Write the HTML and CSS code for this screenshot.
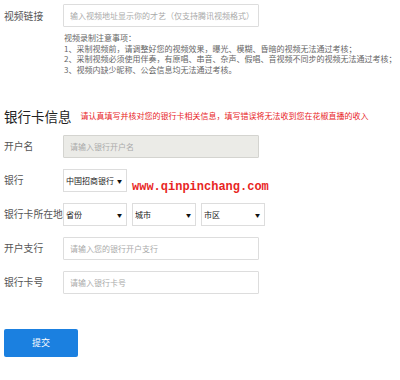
FILE: index.html
```html
<!DOCTYPE html>
<html lang="zh-CN">
<head>
    <meta charset="UTF-8">
    <title>银行卡信息</title>
    <link rel="stylesheet" href="styles.css">
</head>
<body>
    <div class="page">
        <!-- Video link -->
        <div class="form-row">
            <label class="form-label">视频链接</label>
            <input class="form-input" type="text" placeholder="输入视频地址显示你的才艺（仅支持腾讯视频格式）">
        </div>
        <div class="notes">
            <div>视频录制注意事项：</div>
            <div>1、采制视频前，请调整好您的视频效果，曝光、模糊、昏暗的视频无法通过考核；</div>
            <div>2、采制视频必须使用伴奏，有原唱、串音、杂声、假唱、音视频不同步的视频无法通过考核；</div>
            <div>3、视频内缺少昵称、公会信息均无法通过考核。</div>
        </div>

        <!-- Bank card -->
        <div class="section-head">
            <h2 class="section-title">银行卡信息</h2>
            <span class="section-tip">请认真填写并核对您的银行卡相关信息，填写错误将无法收到您在花椒直播的收入</span>
        </div>

        <div class="form-row">
            <label class="form-label">开户名</label>
            <input class="form-input disabled" type="text" placeholder="请输入银行开户名" disabled>
        </div>
        <div class="form-row">
            <label class="form-label">银行</label>
            <div class="select"><span>中国招商银行</span><span class="arrow">▼</span></div>
            <span class="watermark">www.qinpinchang.com</span>
        </div>
        <div class="form-row">
            <label class="form-label">银行卡所在地</label>
            <div class="select-group">
                <div class="select"><span>省份</span><span class="arrow">▼</span></div>
                <div class="select"><span>城市</span><span class="arrow">▼</span></div>
                <div class="select"><span>市区</span><span class="arrow">▼</span></div>
            </div>
        </div>
        <div class="form-row">
            <label class="form-label">开户支行</label>
            <input class="form-input" type="text" placeholder="请输入您的银行开户支行">
        </div>
        <div class="form-row">
            <label class="form-label">银行卡号</label>
            <input class="form-input" type="text" placeholder="请输入银行卡号">
        </div>

        <button class="submit-btn">提交</button>
    </div>
</body>
</html>
```

FILE: styles.css
```css
body {
    margin: 0;
    padding: 0;
    background: #fff;
    color: #555;
    font-family: "Noto Sans CJK SC", "Noto Sans", sans-serif;
}

.page {
    padding: 4px 0 0 4px;
}

/* Rows */
.form-row {
    display: flex;
    align-items: center;
    height: 23px;
    margin-bottom: 11px;
}

.form-label {
    width: 59px;
    flex-shrink: 0;
    font-size: 9.8px;
    color: #555;
    white-space: nowrap;
}

.form-input {
    box-sizing: border-box;
    width: 196px;
    height: 23px;
    margin: 0;
    padding: 0 6px;
    border: 1px solid #ddd;
    border-radius: 1px;
    font-family: inherit;
    font-size: 8px;
    outline: none;
}

.form-input::placeholder {
    color: #aaa;
}

.form-input.disabled {
    background: #ebebe7;
    border-color: #d4d4d0;
}

/* Notes under video link */
.notes {
    margin-top: -5px;
    padding-left: 60px;
    font-size: 8px;
    line-height: 10.7px;
    color: #666;
}

/* Section heading */
.section-head {
    display: flex;
    align-items: center;
    margin-top: 30px;
    margin-bottom: 9px;
    height: 20px;
}

.section-title {
    margin: 0;
    font-size: 13.5px;
    font-weight: normal;
    color: #222;
}

.section-tip {
    margin-left: 9px;
    font-size: 8px;
    color: #e8261f;
}

/* Selects */
.select {
    box-sizing: border-box;
    width: 64px;
    height: 23px;
    padding: 0 4px 0 2px;
    display: flex;
    align-items: center;
    justify-content: space-between;
    border: 1px solid #ddd;
    background: #fff;
    font-size: 8px;
    color: #222;
    white-space: nowrap;
}

.select .arrow {
    font-size: 5px;
    color: #111;
}

.select-group {
    display: flex;
    gap: 5px;
}

.watermark {
    margin-left: 5px;
    margin-top: 13px;
    font-family: "Liberation Mono", monospace;
    font-size: 12px;
    font-weight: bold;
    color: #e8261f;
}

/* Submit */
.submit-btn {
    margin-top: 24px;
    width: 74px;
    height: 28px;
    border: none;
    border-radius: 2px;
    background: #1b80e0;
    color: #fff;
    font-family: inherit;
    font-size: 9px;
    cursor: pointer;
}
```
